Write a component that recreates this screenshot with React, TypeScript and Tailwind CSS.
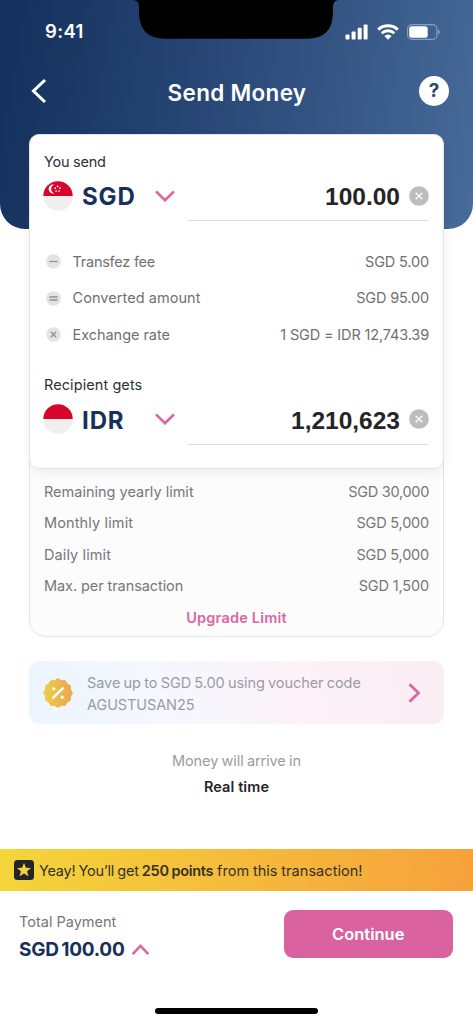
import React from "react";

const Stroke = ({ d, box, className }: { d: string; box: string; className: string }) => (
  <svg viewBox={box} fill="none" stroke="currentColor" strokeWidth="2.7" strokeLinecap="butt" strokeLinejoin="miter" className={className}>
    <path d={d} />
  </svg>
);

const Flag = ({ stars }: { stars?: boolean }) => (
  <svg viewBox="0 0 30 30" className="h-[30px] w-[30px] shrink-0">
    <path d="M.3 15a14.7 14.7 0 0 0 29.4 0z" fill="#efefef" />
    <path d="M.3 15a14.7 14.7 0 0 1 29.4 0z" fill="#d90429" />
    {stars && (
      <g fill="#fff">
        <path d="M11.3 3.8a4.4 4.4 0 1 0 0 8.4 4.4 4.4 0 0 1 0-8.4z" />
        <circle cx="14.6" cy="5.4" r=".85" />
        <circle cx="12.2" cy="7.2" r=".85" />
        <circle cx="17" cy="7.2" r=".85" />
        <circle cx="13.1" cy="10" r=".85" />
        <circle cx="16.1" cy="10" r=".85" />
      </g>
    )}
  </svg>
);

const Clear = () => (
  <svg viewBox="0 0 20 20" className="ml-[9px] h-5 w-5 shrink-0">
    <circle cx="10" cy="10" r="9.8" fill="#bcbcc1" />
    <path d="M6.7 6.7l6.6 6.6M13.3 6.7l-6.6 6.6" stroke="#fff" strokeWidth="1.3" />
  </svg>
);

const Sign = ({ d }: { d: string }) => (
  <svg viewBox="0 0 15 15" className="mr-[11.5px] h-[15px] w-[15px] shrink-0">
    <circle cx="7.5" cy="7.5" r="7.3" fill="#e4e4e7" />
    <path d={d} stroke="#8f8f96" strokeWidth="1.3" />
  </svg>
);

type MoneyProps = { label: string; labelClass: string; code: string; amount: string; stars?: boolean };

const Money = ({ label, labelClass, code, amount, stars }: MoneyProps) => (
  <div className="h-[69px]">
    <div className="h-5 pt-[0.5px] text-[14.5px] leading-5 text-[#303033]">
      <span className={labelClass}>{label}</span>
    </div>
    <div className="flex h-[49px] justify-between">
      <div className="-ml-[1px] flex h-[49px] w-[132px] items-start pt-[9.5px]">
        <Flag stars={stars} />
        <span className="ml-[9px] pt-[1.5px] text-[24px] font-bold leading-[30px] tracking-[0.9px] text-[#17305b]">{code}</span>
        <Stroke box="0 0 20 12" d="M1 1.4l9 8.8 9-8.8" className="ml-auto mt-[9px] h-3 w-5 text-[#dc65a2]" />
      </div>
      <div className="flex h-[50px] w-[242px] items-start justify-end border-b border-[#dedee0] pt-[14px]">
        <span className="font-['Liberation_Sans',sans-serif] text-[24.5px] font-bold leading-[24px] text-[#252527]">{amount}</span>
        <div className="pt-[0.5px]">
          <Clear />
        </div>
      </div>
    </div>
  </div>
);

const fees = [
  { label: "Transfez fee", value: "SGD 5.00", d: "M3.3 7.5h8.4", labelClass: "tracking-[-0.25px]" },
  { label: "Converted amount", value: "SGD 95.00", d: "M3.3 6h8.4M3.3 9h8.4", labelClass: "tracking-[0.06px]" },
  { label: "Exchange rate", value: "1 SGD = IDR 12,743.39", d: "M4.8 4.8l5.4 5.4M10.2 4.8l-5.4 5.4", labelClass: "tracking-[-0.04px]" },
];

const limits = [
  { label: "Remaining yearly limit", value: "SGD 30,000", labelClass: "", valueClass: "tracking-[-0.3px]" },
  { label: "Monthly limit", value: "SGD 5,000", labelClass: "tracking-[0.13px]", valueClass: "tracking-[-0.2px]" },
  { label: "Daily limit", value: "SGD 5,000", labelClass: "tracking-[0.1px]", valueClass: "tracking-[-0.2px]" },
  { label: "Max. per transaction", value: "SGD 1,500", labelClass: "tracking-[-0.08px]", valueClass: "tracking-[-0.15px]" },
];

const badge = Array.from({ length: 96 }, (_, i) => {
  const a = (i / 96) * Math.PI * 2;
  const r = 14 + 0.65 * Math.cos(a * 12);
  return `${(15 + r * Math.sin(a)).toFixed(2)},${(15 - r * Math.cos(a)).toFixed(2)}`;
}).join(" ");

export default function App() {
  return (
    <div className="flex h-[1024px] w-[473px] flex-col overflow-hidden bg-white font-['Inter',sans-serif] text-[14.5px]">
      <header className="relative h-[229px] shrink-0 rounded-b-[25px] bg-[linear-gradient(100deg,#142f5b_0%,#2b4b7a_50%,#486b9a_100%)] text-white">
        <svg viewBox="0 0 206 40" className="absolute left-[133px] top-0 h-10 w-[206px]">
          <path d="M0 0Q6 0 6 7V12Q6 38.7 32 38.7H174Q200 38.7 200 12V7Q200 0 206 0Z" fill="#000" />
        </svg>
        <div className="flex h-[62px] items-center justify-between pl-[45px] pr-[33px]">
          <span className="pt-px text-[18.5px] font-semibold tracking-[0.35px]">9:41</span>
          <div className="flex items-center pt-px">
            <svg viewBox="0 0 23 16" className="h-4 w-[23px]" fill="#fff">
              <rect x="0.5" y="10.5" width="4" height="5" rx="1" />
              <rect x="6.6" y="7.5" width="4" height="8" rx="1" />
              <rect x="12.7" y="3.7" width="4" height="11.8" rx="1" />
              <rect x="18.6" y=".5" width="4" height="15" rx="1" />
            </svg>
            <svg viewBox="0 0 22 16" className="ml-[9px] h-4 w-[22px]" fill="none" stroke="#fff" strokeWidth="2.9">
              <path d="M1.2 5.6Q5.3 1.8 11 1.8T20.8 5.6" />
              <path d="M4.7 9.2Q7.4 6.7 11 6.7T17.3 9.2" />
              <path d="M7.3 12L11 15.8 14.7 12Q11 9 7.3 12z" fill="#fff" stroke="none" />
            </svg>
            <svg viewBox="0 0 33 16" className="ml-2 h-4 w-[33px]">
              <rect x=".6" y=".6" width="29.3" height="14.8" rx="4.4" fill="none" stroke="#fff" strokeOpacity=".4" strokeWidth="1.1" />
              <rect x="2.2" y="2.3" width="18.5" height="11.4" rx="2.5" fill="#fff" />
              <path d="M31.2 5.3v5.2q1.5-.7 1.5-2.6t-1.5-2.6z" fill="#fff" opacity=".45" />
            </svg>
          </div>
        </div>
        <div className="flex h-[58px] items-center justify-between pl-[31px] pr-6">
          <Stroke box="0 0 16 26" d="M14 2L2.5 13 14 24" className="h-[26px] w-4 stroke-[3.1]" />
          <h1 className="pl-[8px] pt-[3px] text-[22.5px] font-semibold tracking-[0.3px]">Send Money</h1>
          <div className="flex h-[30px] w-[30px] items-center justify-center rounded-full bg-white text-[19px] font-bold text-[#294875]">?</div>
        </div>
      </header>

      <main className="relative mx-[29px] -mt-[95px] flex flex-col">
        <section className="h-[503px] rounded-2xl border border-[#e5e5e7] bg-[#fcfcfc]">
          <div className="-m-px h-[335px] rounded-[10px] border border-[#e4e4e7] bg-white px-[14px] pt-4 shadow-[0_4px_12px_rgba(0,0,0,0.06)]">
            <Money label="You send" labelClass="tracking-[-0.25px]" code="SGD" amount="100.00" stars />
            <div className="mt-[23.5px] flex flex-col text-[#707074]">
              {fees.map((f) => (
                <div key={f.label} className="flex h-[36.5px] items-center pl-[2px]">
                  <Sign d={f.d} />
                  <span className={f.labelClass}>{f.label}</span>
                  <span className="ml-auto tracking-[-0.15px]">{f.value}</span>
                </div>
              ))}
            </div>
            <div className="mt-[21.5px]">
              <Money label="Recipient gets" labelClass="tracking-[0.08px]" code="IDR" amount="1,210,623" />
            </div>
          </div>
          <div className="px-[14px] pt-[8px] text-[#77777b]">
            {limits.map((l) => (
              <div key={l.label} className="flex h-[31.5px] items-center justify-between">
                <span className={l.labelClass}>{l.label}</span>
                <span className={l.valueClass}>{l.value}</span>
              </div>
            ))}
            <div className="flex h-[31px] items-center justify-center font-semibold tracking-[0.2px] text-[#dc65a2]">Upgrade Limit</div>
          </div>
        </section>

        <section className="mt-6 flex h-[63px] items-center rounded-[10px] bg-[linear-gradient(75deg,#ecf5ff_0%,#f5f8ff_32%,#fdf2f8_65%,#faedf4_100%)] pl-[14px] pr-[23px]">
          <svg viewBox="0 0 30 30" className="h-[30px] w-[30px]">
            <defs>
              <linearGradient id="gold">
                <stop stopColor="#ebcf4b" />
                <stop offset="1" stopColor="#eba64b" />
              </linearGradient>
            </defs>
            <polygon points={badge} fill="url(#gold)" />
            <path d="M10.3 19.7l9.4-9.4" stroke="#fff" strokeWidth="2.5" strokeLinecap="round" />
            <circle cx="10.8" cy="10.8" r="1.6" fill="#fff" />
            <circle cx="19.2" cy="19.2" r="1.6" fill="#fff" />
          </svg>
          <p className="ml-[14px] pt-[2px] leading-[21.5px] text-[#9b9ba5]">
            <span className="tracking-[-0.07px] [word-spacing:-0.7px]">Save up to SGD 5.00 using voucher code</span>
            <br />
            <span className="tracking-[-0.1px]">AGUSTUSAN25</span>
          </p>
          <Stroke box="0 0 13 20" d="M1.5 1.2L10.5 10 1.5 18.8" className="ml-auto h-5 w-[13px] text-[#dc65a2]" />
        </section>

        <section className="mt-[24px] flex flex-col items-center">
          <span className="h-[26px] leading-[26px] tracking-[-0.1px] text-[#9b9ba3] [word-spacing:-0.6px]">Money will arrive in</span>
          <span className="h-[26px] leading-[26px] font-semibold tracking-[0.1px] text-[#252527]">Real time</span>
        </section>
      </main>

      <footer className="mt-auto h-[175px] shrink-0">
        <div className="flex h-[41.5px] items-center bg-[linear-gradient(100deg,#f3d63a_0%,#f5bb3b_50%,#f6a13c_100%)] pl-[14px] text-[#353126]">
          <svg viewBox="0 0 20 20" className="mr-[5px] h-5 w-5">
            <rect width="20" height="20" rx="3.5" fill="#252527" />
            <path d="M10 3l1.9 4.8 5.1.3-3.95 3.2 1.35 5L10 13.5 5.6 16.3l1.35-5L3 8.1l5.1-.3z" fill="#f4d23c" />
          </svg>
          <p className="pt-[2px]">
            <span className="tracking-[-0.25px] [word-spacing:-0.6px]">Yeay! You’ll get </span>
            <b className="font-semibold tracking-[-0.3px] [word-spacing:-0.5px]">250 points</b>
            <span className="tracking-[0.05px] [word-spacing:-0.4px]"> from this transaction!</span>
          </p>
        </div>
        <div className="flex justify-between pl-[19px] pr-5 pt-[19.5px]">
          <div className="flex flex-col">
            <span className="h-6 leading-6 text-[#77777b]">Total Payment</span>
            <div className="flex h-[30px] items-center">
              <span className="pt-[2px] text-[19px] font-bold tracking-[-0.25px] text-[#17305b] [word-spacing:-1.6px]">SGD 100.00</span>
              <Stroke box="0 0 20 12" d="M1.5 11l8.5-9 8.5 9" className="ml-[6px] h-[11px] w-[19px] text-[#dc65a2]" />
            </div>
          </div>
          <button className="h-[48px] w-[169.5px] rounded-[9px] bg-[#d9629f] pt-px text-[16.5px] font-semibold text-white">Continue</button>
        </div>
        <div className="mx-auto mt-[44px] h-[6px] w-[163px] rounded-full bg-black" />
      </footer>
    </div>
  );
}
